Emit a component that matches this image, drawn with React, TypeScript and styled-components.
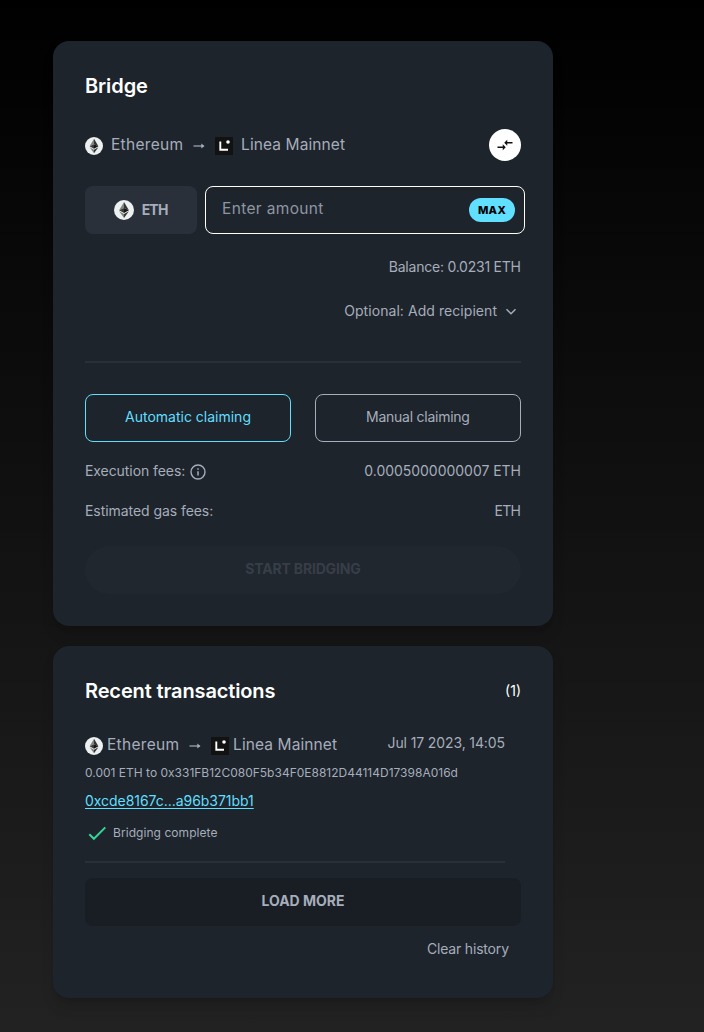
import React from "react";
import styled, { createGlobalStyle } from "styled-components";

const color = {
  card: "#1d242b",
  text: "#a6adbb",
  cyan: "#61dfff",
  line: "#2a2f38",
};

const GlobalStyle = createGlobalStyle`
  * { box-sizing: border-box; }
  html { background: #212121; }
  body { margin: 0; }
  button, input { font: inherit; color: inherit; letter-spacing: inherit; }
`;

const Page = styled.main`
  min-height: 1032px;
  padding: 41px 0 0 53px;
  display: flex;
  flex-direction: column;
  gap: 20px;
  background: linear-gradient(180deg, #000 0%, #222 100%);
  color: ${color.text};
  font-family: Inter, "Liberation Sans", sans-serif;
  font-size: 14px;
  line-height: 20px;
`;

const Card = styled.section<{ $height: number }>`
  width: 500px;
  height: ${(p) => p.$height}px;
  padding: 31px 32px 32px;
  display: flex;
  flex-direction: column;
  border-radius: 16px;
  background: ${color.card};
  box-shadow: 0 10px 15px -3px rgba(0, 0, 0, 0.15), 0 4px 6px -4px rgba(0, 0, 0, 0.15);
`;

const Label = styled.span<{ $track?: number; $size?: number }>`
  white-space: nowrap;
  font-size: ${(p) => p.$size ?? 14}px;
  letter-spacing: ${(p) => p.$track ?? 0}px;
  margin-right: ${(p) => -(p.$track ?? 0)}px;
`;

const Heading = styled.h2<{ $track: number }>`
  margin: 0;
  color: #fff;
  font-size: 20px;
  line-height: 28px;
  font-weight: 600;
  letter-spacing: ${(p) => p.$track}px;
`;

const HeadingRow = styled.header`
  display: flex;
  justify-content: space-between;
  align-items: center;
  color: #fff;
`;

const Between = styled.div<{ $top?: number; $height?: number }>`
  display: flex;
  justify-content: space-between;
  align-items: center;
  margin-top: ${(p) => p.$top ?? 0}px;
  height: ${(p) => (p.$height ? `${p.$height}px` : "auto")};
`;

const Route = styled.div<{ $gap: number }>`
  display: flex;
  align-items: center;
  font-size: 16px;

  > span { margin-left: ${(p) => p.$gap}px; }
`;

const Arrow = styled.svg`
  margin: 2px 10px 0;
`;

const IconSlot = styled.span`
  && { margin: 2px 0 0; }
  display: flex;
`;

const SwapButton = styled.button`
  width: 32px;
  height: 32px;
  padding: 0;
  display: grid;
  place-items: center;
  border: 0;
  border-radius: 50%;
  background: #fff;
  color: #111;
`;

const AmountRow = styled.div`
  display: flex;
  gap: 8px;
  width: 440px;
  margin-top: 25px;
`;

const TokenButton = styled.button`
  width: 112px;
  height: 48px;
  padding: 0;
  display: flex;
  align-items: center;
  justify-content: center;
  gap: 8px;
  border: 0;
  border-radius: 8px;
  background: #2a303a;
  font-weight: 700;
`;

const AmountField = styled.div`
  flex: 1;
  height: 48px;
  padding: 0 9px 2px 16px;
  display: flex;
  align-items: center;
  justify-content: space-between;
  border: 1px solid #fff;
  border-radius: 8px;
  color: #8f96a3;
`;

const MaxButton = styled.button`
  width: 46px;
  height: 24px;
  margin-top: 2px;
  padding: 0 0 1px;
  border: 0;
  border-radius: 12px;
  background: ${color.cyan};
  color: #000;
  font-size: 11px;
  font-weight: 800;
  letter-spacing: 0.3px;
`;

const EndLine = styled.div<{ $top: number; $inset?: number }>`
  display: flex;
  justify-content: flex-end;
  align-items: center;
  gap: 8px;
  height: 20px;
  margin-top: ${(p) => p.$top}px;
  padding-right: ${(p) => p.$inset ?? 0}px;
`;

const Divider = styled.hr<{ $top: number; $width: number }>`
  width: ${(p) => p.$width}px;
  height: 2px;
  margin: ${(p) => p.$top}px 0 0;
  border: 0;
  background: ${color.line};
`;

const ClaimOptions = styled.div`
  display: grid;
  grid-template-columns: 1fr 1fr;
  gap: 24px;
  margin-top: 31px;
`;

const ClaimButton = styled.button<{ $active?: boolean }>`
  height: 48px;
  padding: 0 0 2px;
  border: 1px solid ${(p) => (p.$active ? color.cyan : color.text)};
  border-radius: 8px;
  background: transparent;
  color: ${(p) => (p.$active ? color.cyan : color.text)};
`;

const InfoLabel = styled.div`
  display: flex;
  align-items: center;
  gap: 5px;

  svg { margin-top: 2px; }
`;

const WideButton = styled.button<{ $kind: "disabled" | "load"; $top: number }>`
  flex: none;
  height: 48px;
  margin-top: ${(p) => p.$top}px;
  padding: 0 0 2px;
  border: 0;
  border-radius: ${(p) => (p.$kind === "disabled" ? 24 : 8)}px;
  background: ${(p) => (p.$kind === "disabled" ? "#20272e" : "#191e25")};
  color: ${(p) => (p.$kind === "disabled" ? "#383e47" : color.text)};
  font-weight: 700;
`;

const TxLink = styled.a`
  align-self: flex-start;
  margin-top: 9px;
  color: ${color.cyan};
  text-decoration: underline;
  text-underline-offset: 2px;
`;

const TxAmount = styled.div`
  height: 20px;
  margin-top: 7px;
`;

const Status = styled.div`
  display: flex;
  align-items: center;
  gap: 6px;
  height: 20px;
  margin-top: 12px;
  padding-left: 3px;
`;

const EthIcon = ({ size }: { size: number }) => (
  <svg width={size} height={size} viewBox="0 0 18 18">
    <circle cx="9" cy="9" r="9" fill="#ecf0f0" />
    <path d="M9 1.8 4.6 9.2 9 7.2Z" fill="#828384" />
    <path d="M9 1.8 13.4 9.2 9 7.2Z" fill="#343434" />
    <path d="M4.6 9.2 9 7.2V11.8Z" fill="#393939" />
    <path d="M13.4 9.2 9 7.2V11.8Z" fill="#141414" />
    <path d="M4.6 10.2 9 12.7V16.2Z" fill="#828384" />
    <path d="M13.4 10.2 9 12.7V16.2Z" fill="#343434" />
  </svg>
);

const LineaIcon = () => (
  <svg width="18" height="18" viewBox="0 0 18 18">
    <rect width="18" height="18" fill="#121212" />
    <path d="M5.3 4.5v8.3H13" fill="none" stroke="#fff" strokeWidth="1.9" />
    <circle cx="13" cy="5" r="1.8" fill="#fff" />
  </svg>
);

const RightArrow = () => (
  <Arrow width="12" height="8" viewBox="0 0 12 8">
    <path d="M0.5 4H10.5" stroke={color.text} strokeWidth="1.2" />
    <path d="M8.3 1.4 11.5 4 8.3 6.6Z" fill={color.text} />
  </Arrow>
);

const SwapIcon = () => (
  <svg width="18" height="18" viewBox="0 0 24 24" fill="currentColor">
    <path d="m9.01 14-7.01 0v2h7.01v3L13 15l-3.99-4v3zm5.98-1v-3H22V8h-7.01V5L11 9l3.99 4z" />
  </svg>
);

const ChevronIcon = () => (
  <svg width="12" height="8" viewBox="0 0 12 8">
    <path d="m1.5 2.3 4.5 4.4 4.5-4.4" fill="none" stroke={color.text} strokeWidth="1.5" />
  </svg>
);

const InfoIcon = () => (
  <svg width="16" height="16" viewBox="0 0 16 16">
    <circle cx="8" cy="8" r="7" fill="none" stroke={color.text} strokeWidth="1.4" />
    <path d="M8 7.2v4.3M8 4.3v1.5" stroke={color.text} strokeWidth="1.5" />
  </svg>
);

const CheckIcon = () => (
  <svg width="19" height="16" viewBox="0 0 19 16">
    <path d="m1.3 9.2 4.6 4.6L17.3 2.4" fill="none" stroke="#36d399" strokeWidth="2" />
  </svg>
);

const ChainRoute = ({ gap }: { gap: number }) => (
  <Route $gap={gap}>
    <IconSlot><EthIcon size={18} /></IconSlot>
    <Label $size={15.5} $track={0.3}>Ethereum</Label>
    <RightArrow />
    <IconSlot><LineaIcon /></IconSlot>
    <Label $size={15.5} $track={0.1}>Linea Mainnet</Label>
  </Route>
);

const BridgeCard = () => (
  <Card $height={585}>
    <Heading $track={-0.1}>Bridge</Heading>
    <Between $top={29} $height={32}>
      <ChainRoute gap={8} />
      <SwapButton aria-label="Swap networks"><SwapIcon /></SwapButton>
    </Between>
    <AmountRow>
      <TokenButton>
        <EthIcon size={20} />
        <Label $track={-0.8}>ETH</Label>
      </TokenButton>
      <AmountField>
        <Label $size={15.5} $track={0.35}>Enter amount</Label>
        <MaxButton>MAX</MaxButton>
      </AmountField>
    </AmountRow>
    <EndLine $top={23}><Label $track={-0.23}>Balance: 0.0231 ETH</Label></EndLine>
    <EndLine $top={24} $inset={4}>
      <Label $track={0.06}>Optional: Add recipient</Label>
      <ChevronIcon />
    </EndLine>
    <Divider $top={40} $width={436} />
    <ClaimOptions>
      <ClaimButton $active><Label>Automatic claiming</Label></ClaimButton>
      <ClaimButton><Label $track={-0.25}>Manual claiming</Label></ClaimButton>
    </ClaimOptions>
    <Between $top={19} $height={20}>
      <InfoLabel><Label $track={-0.07}>Execution fees:</Label><InfoIcon /></InfoLabel>
      <Label $track={-0.03}>0.0005000000007 ETH</Label>
    </Between>
    <Between $top={20} $height={20}>
      <Label $track={-0.06}>Estimated gas fees:</Label>
      <Label $track={-0.7}>ETH</Label>
    </Between>
    <WideButton $kind="disabled" $top={25} disabled>
      <Label $track={-0.18}>START BRIDGING</Label>
    </WideButton>
  </Card>
);

const TransactionsCard = () => (
  <Card $height={352}>
    <HeadingRow>
      <Heading $track={-0.13}>Recent transactions</Heading>
      <Label>(1)</Label>
    </HeadingRow>
    <Between $top={30} $height={20}>
      <ChainRoute gap={4} />
      <EndLine $top={-4} $inset={16}><Label $track={-0.12}>Jul 17 2023, 14:05</Label></EndLine>
    </Between>
    <TxAmount>
      <Label $size={12}>0.001 ETH to 0x331FB12C080F5b34F0E8812D44114D17398A016d</Label>
    </TxAmount>
    <TxLink><Label $track={-0.04}>0xcde8167c...a96b371bb1</Label></TxLink>
    <Status>
      <CheckIcon />
      <Label $size={12} $track={0.06}>Bridging complete</Label>
    </Status>
    <Divider $top={18} $width={420} />
    <WideButton $kind="load" $top={15}><Label>LOAD MORE</Label></WideButton>
    <EndLine $top={13} $inset={12}><Label $track={-0.18}>Clear history</Label></EndLine>
  </Card>
);

export default function App() {
  return (
    <Page>
      <GlobalStyle />
      <BridgeCard />
      <TransactionsCard />
    </Page>
  );
}
